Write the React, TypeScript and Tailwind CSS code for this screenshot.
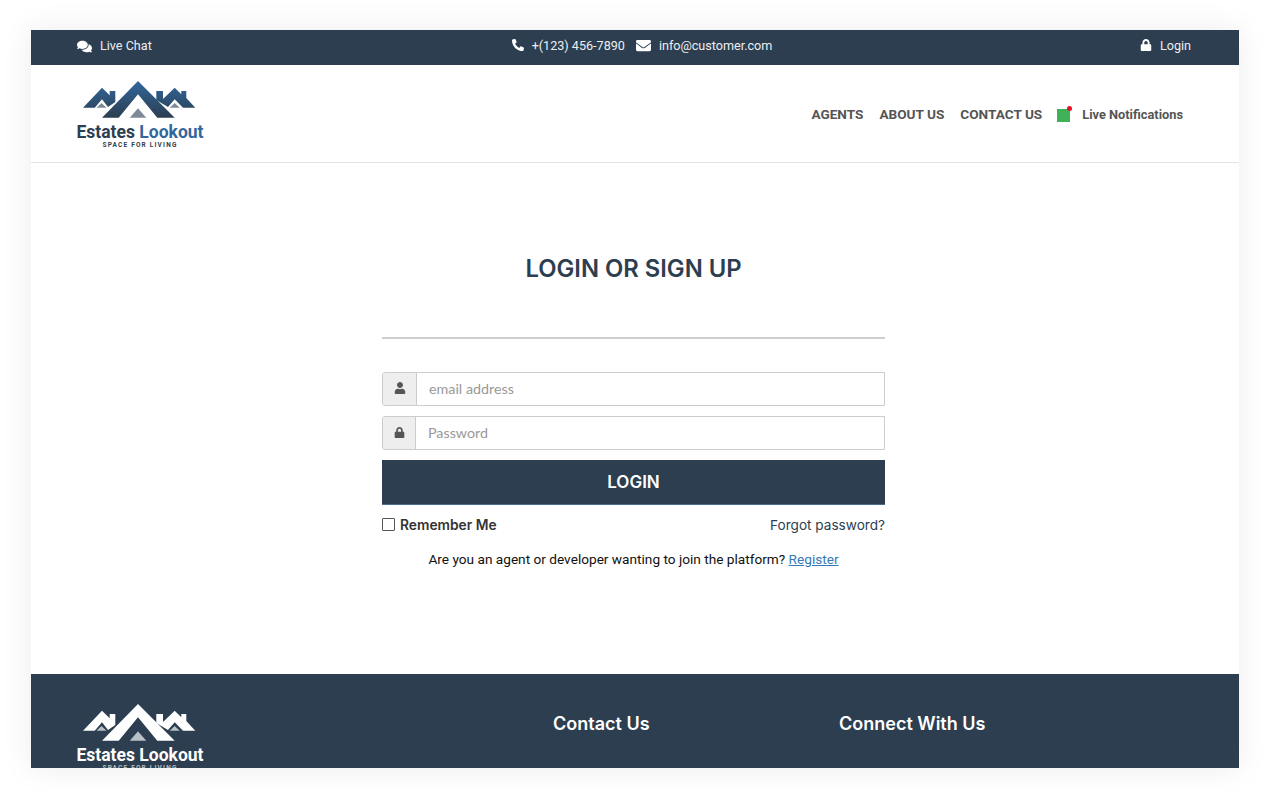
import React from "react";
import { FaComments, FaEnvelope, FaLock, FaPhoneAlt, FaUser } from "react-icons/fa";

const Logo = ({ light = false }: { light?: boolean }) => {
  const id = light ? "roofLight" : "roofDark";
  const fill = `url(#${id})`;
  const small = light ? "#b9c0c8" : "#7d8b99";
  return (
    <div className="flex flex-col items-center w-[128px] shrink-0">
      <svg width="114" height="39" viewBox="0 0 114 39" className="block">
        <defs>
          <linearGradient id={id} gradientUnits="userSpaceOnUse" x1="0" y1="0" x2="0" y2="38">
            <stop offset="0" stopColor={light ? "#ffffff" : "#31689f"} />
            <stop offset="1" stopColor={light ? "#ffffff" : "#2c3e50"} />
          </linearGradient>
        </defs>
        <path d="M55 1 L91.7 37.7 H74.3 L55 14.3 L35.7 37.7 H19 Z" fill={fill} />
        <path d="M0 27.7 L19 7.7 L26.7 15.3 V11 H32.3 V22 L25 27 L19 19.3 L11.7 27.7 Z" fill={fill} />
        <path d="M112.3 27.7 L103.3 18 V11 H98.3 V14.3 L91.7 7.7 L80 19 V11 H73.3 V20 L85 27 L91.7 19.3 L100 27.7 Z" fill={fill} />
        <path d="M55 28.3 L63.3 37.7 H46.7 Z" fill={small} />
        <path d="M18.5 23 L23.5 27.7 H13.5 Z" fill={small} />
        <path d="M91.7 23 L96.7 27.7 H86.7 Z" fill={small} />
      </svg>
      <div className={`font-['Roboto',sans-serif] font-bold text-[17.5px] leading-[20px] mt-[3px] whitespace-nowrap ${light ? "text-white" : "text-[#2c3e50]"}`}>
        Estates <span className={light ? "text-white" : "text-[#33679c]"}>Lookout</span>
      </div>
      <div className={`font-['Roboto',sans-serif] font-bold text-[6.5px] leading-[8px] tracking-[1.2px] whitespace-nowrap -mt-[1px] ${light ? "text-[#b9c0c8]" : "text-[#2c3e50]"}`}>
        SPACE FOR LIVING
      </div>
    </div>
  );
};

const App = () => {
  return (
    <div className="bg-white h-[796px] pt-[30px] pl-[31px] font-['Roboto',sans-serif]">
      <div className="w-[1208px] h-[738px] flex flex-col overflow-hidden bg-white shadow-[0_0_30px_rgba(0,0,0,0.08)]">
        <div className="h-[35px] shrink-0 bg-[#2c3e50] text-[#eceff2] text-[12.6px] flex items-center justify-between pl-[46px] pr-[48px] pb-[2px]">
          <div className="flex items-center gap-2 w-[200px]">
            <FaComments className="text-white text-[15px]" />
            <span>Live Chat</span>
          </div>
          <div className="flex items-center ml-[16px]">
            <FaPhoneAlt className="text-white text-[12px] mr-[8px] -mt-[2px]" />
            <span>+(123) 456-7890</span>
            <FaEnvelope className="text-white text-[15px] ml-[11px] mr-[8px] -mt-[1px]" />
            <span>info@customer.com</span>
          </div>
          <div className="flex items-center justify-end gap-[8px] w-[200px]">
            <FaLock className="text-white text-[12px] -mt-[2px]" />
            <span>Login</span>
          </div>
        </div>

        <div className="h-[98px] shrink-0 border-b border-[#e4e4e4] flex items-center justify-between pl-[45px] pr-[56px]">
          <div className="pt-[2px]">
            <Logo />
          </div>
          <nav className="flex items-center text-[#555] font-bold text-[13.6px] pt-[1px]">
            <a className="mr-[16px]">AGENTS</a>
            <a className="mr-[16px]">ABOUT US</a>
            <a className="mr-[15px]">CONTACT US</a>
            <span className="relative w-[13px] h-[13px] bg-[#3fb257] mr-[12px] mt-[3px]">
              <span className="absolute -top-[3px] -right-[2px] w-[5px] h-[5px] rounded-full bg-[#e8112d]" />
            </span>
            <a className="text-[12.8px] pt-[1px]">Live Notifications</a>
          </nav>
        </div>

        <main className="h-[511px] shrink-0 flex flex-col items-center pr-[3px]">
          <h1 className="font-['Inter',sans-serif] font-semibold text-[23.8px] leading-[30px] text-[#2c3e50] mt-[91px]">
            LOGIN OR SIGN UP
          </h1>
          <div className="w-[503px] mt-[53px]">
            <div className="h-[2px] bg-[#cfcfcf]" />
            <div className="mt-[33px] h-[34px] flex border border-[#ccc] rounded-l-[3px] overflow-hidden">
              <div className="w-[34px] bg-[#eee] border-r border-[#ccc] flex items-center justify-center">
                <FaUser className="text-[#555] text-[12px] -mt-[2px]" />
              </div>
              <input
                placeholder="email address"
                className="flex-1 px-3 pb-[1px] font-['Lato',sans-serif] text-[14.3px] outline-none placeholder:text-[#999]"
              />
            </div>
            <div className="mt-[10px] h-[34px] flex border border-[#ccc] rounded-l-[3px] overflow-hidden">
              <div className="w-[33px] bg-[#eee] border-r border-[#ccc] flex items-center justify-center">
                <FaLock className="text-[#555] text-[11px] -mt-[2px]" />
              </div>
              <input
                placeholder="Password"
                className="flex-1 px-3 pb-[1px] font-['Lato',sans-serif] text-[14.3px] outline-none placeholder:text-[#999]"
              />
            </div>
            <button className="mt-[10px] w-full h-[45px] pt-[2px] bg-[#2c3e50] border-b border-[#4a6d8f] text-white font-['Inter',sans-serif] font-semibold text-[17px]">
              LOGIN
            </button>
            <div className="mt-[12px] flex items-center justify-between font-['Inter',sans-serif] text-[13.6px] leading-[16px]">
              <label className="flex items-center gap-[5px] font-semibold text-[#333] text-[13.8px]">
                <span className="w-[13px] h-[13px] border border-[#555] rounded-[1px] -mt-[2px]" />
                Remember Me
              </label>
              <a className="text-[#2c3e50]">Forgot password?</a>
            </div>
            <p className="mt-[16px] text-center text-[13.65px] leading-[20px] text-[#111]">
              Are you an agent or developer wanting to join the platform?{" "}
              <a className="text-[#337ab7] underline">Register</a>
            </p>
          </div>
        </main>

        <footer className="flex-1 min-h-0 bg-[#2c3e50] text-white flex pl-[45px] overflow-hidden">
          <div className="pt-[29px]">
            <Logo light />
          </div>
          <h3 className="font-['Inter',sans-serif] font-semibold text-[18px] leading-[24px] mt-[38px] ml-[349px] w-[286px]">
            Contact Us
          </h3>
          <h3 className="font-['Inter',sans-serif] font-semibold text-[18px] leading-[24px] mt-[38px]">
            Connect With Us
          </h3>
        </footer>
      </div>
    </div>
  );
};

export default App;
